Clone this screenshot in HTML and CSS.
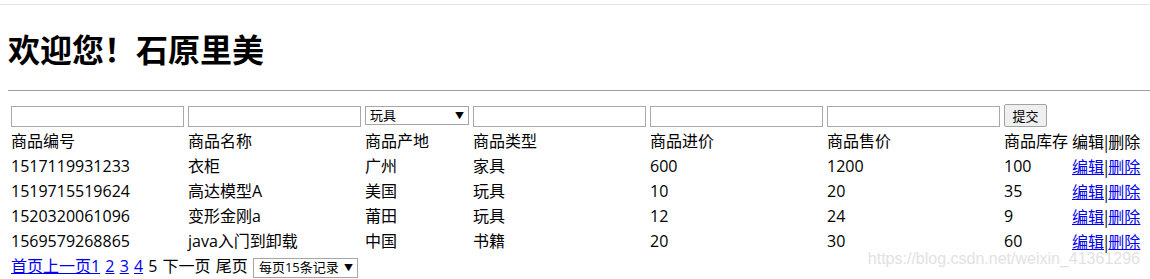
FILE: index.html
```html
<!DOCTYPE html>
<html lang="zh-CN">
<head>
    <meta charset="UTF-8">
    <title>商品管理</title>
    <link rel="stylesheet" href="styles.css">
</head>
<body>

<div class="top-line"></div>
<h1>欢迎您！石原里美</h1>
<div class="rule"></div>

<form id="goods-form">
<table class="goods">
    <tr>
        <td><input type="text" class="wide"></td>
        <td><input type="text" class="wide"></td>
        <td>
            <div class="pick narrow">
                <span>玩具</span><span class="arrow">▼</span>
            </div>
        </td>
        <td><input type="text" class="wide"></td>
        <td><input type="text" class="wide"></td>
        <td><input type="text" class="wide"></td>
        <td><button type="submit">提交</button></td>
        <td></td>
    </tr>
    <tr>
        <td>商品编号</td>
        <td>商品名称</td>
        <td>商品产地</td>
        <td>商品类型</td>
        <td>商品进价</td>
        <td>商品售价</td>
        <td>商品库存</td>
        <td class="ops">编辑|删除</td>
    </tr>
    <tr>
        <td>1517119931233</td>
        <td>衣柜</td>
        <td>广州</td>
        <td>家具</td>
        <td>600</td>
        <td>1200</td>
        <td>100</td>
        <td class="ops"><a href="#">编辑</a>|<a href="#">删除</a></td>
    </tr>
    <tr>
        <td>1519715519624</td>
        <td>高达模型A</td>
        <td>美国</td>
        <td>玩具</td>
        <td>10</td>
        <td>20</td>
        <td>35</td>
        <td class="ops"><a href="#">编辑</a>|<a href="#">删除</a></td>
    </tr>
    <tr>
        <td>1520320061096</td>
        <td>变形金刚a</td>
        <td>莆田</td>
        <td>玩具</td>
        <td>12</td>
        <td>24</td>
        <td>9</td>
        <td class="ops"><a href="#">编辑</a>|<a href="#">删除</a></td>
    </tr>
    <tr>
        <td>1569579268865</td>
        <td>java入门到卸载</td>
        <td>中国</td>
        <td>书籍</td>
        <td>20</td>
        <td>30</td>
        <td>60</td>
        <td class="ops"><a href="#">编辑</a>|<a href="#">删除</a></td>
    </tr>
    <tr>
        <td colspan="8" class="pager"><a href="#">首页</a><a href="#">上一页</a><a href="#">1</a> <a href="#">2</a> <a href="#">3</a> <a href="#">4</a> 5 下一页 尾页 <span class="pick per-page"><span>每页15条记录</span><span class="arrow">▼</span></span></td>
    </tr>
</table>
</form>

<div class="watermark">https://blog.csdn.net/weixin_41361296</div>

</body>
</html>
```

FILE: styles.css
```css
body {
    margin: 0;
    font-family: "Open Sans", "Noto Sans CJK SC", sans-serif;
    font-size: 16px;
    color: #000;
    background-color: #fff;
    position: relative;
    height: 279px;
    overflow: hidden;
}

.top-line {
    margin-top: 4px;
    height: 1px;
    background-color: #e3e3e3;
}

h1 {
    margin: 23px 0 0 8px;
    font-size: 32px;
    line-height: 40px;
    font-weight: bold;
    font-family: "Noto Sans CJK SC", sans-serif;
}

.rule {
    margin: 22px 0 0 8px;
    height: 1px;
    background-color: #9d9d9d;
}

.goods {
    margin: 10px 0 0 8px;
    border-spacing: 2px;
}

.goods td {
    padding: 1px;
    line-height: 21px;
    white-space: nowrap;
    vertical-align: middle;
}

.goods td.ops {
    font-family: "Noto Sans CJK SC", sans-serif;
}

.goods input {
    display: block;
    box-sizing: border-box;
    width: 173px;
    height: 21px;
    margin: 1px 0 0 0;
    border: 1px solid #a9a9a9;
    padding: 0 2px;
}

.pick {
    box-sizing: border-box;
    display: flex;
    justify-content: space-between;
    align-items: center;
    border: 1px solid #a6a6a6;
    background-color: #fff;
    font-size: 13px;
    line-height: 17px;
    padding: 0 4px 0 4px;
}

.narrow {
    width: 104px;
    height: 19px;
    margin-top: 0;
}

.pager {
    word-spacing: 1px;
}

.per-page {
    display: inline-flex;
    width: 105px;
    height: 20px;
    vertical-align: 0;
    padding: 0 4px 0 5px;
    word-spacing: 0;
}

.arrow {
    font-size: 9px;
}

button {
    display: block;
    box-sizing: border-box;
    width: 43px;
    height: 23px;
    padding: 0;
    font-size: 13px;
    font-family: "Noto Sans CJK SC", sans-serif;
    background-color: #efefef;
    border: 1px solid #a3a3a3;
    border-radius: 2px;
}

a {
    color: #0000ee;
    text-decoration: underline;
}

.watermark {
    position: absolute;
    right: 10px;
    top: 250px;
    font-family: "Liberation Sans", Arial, sans-serif;
    font-size: 16px;
    color: #e2e2e2;
}
```
